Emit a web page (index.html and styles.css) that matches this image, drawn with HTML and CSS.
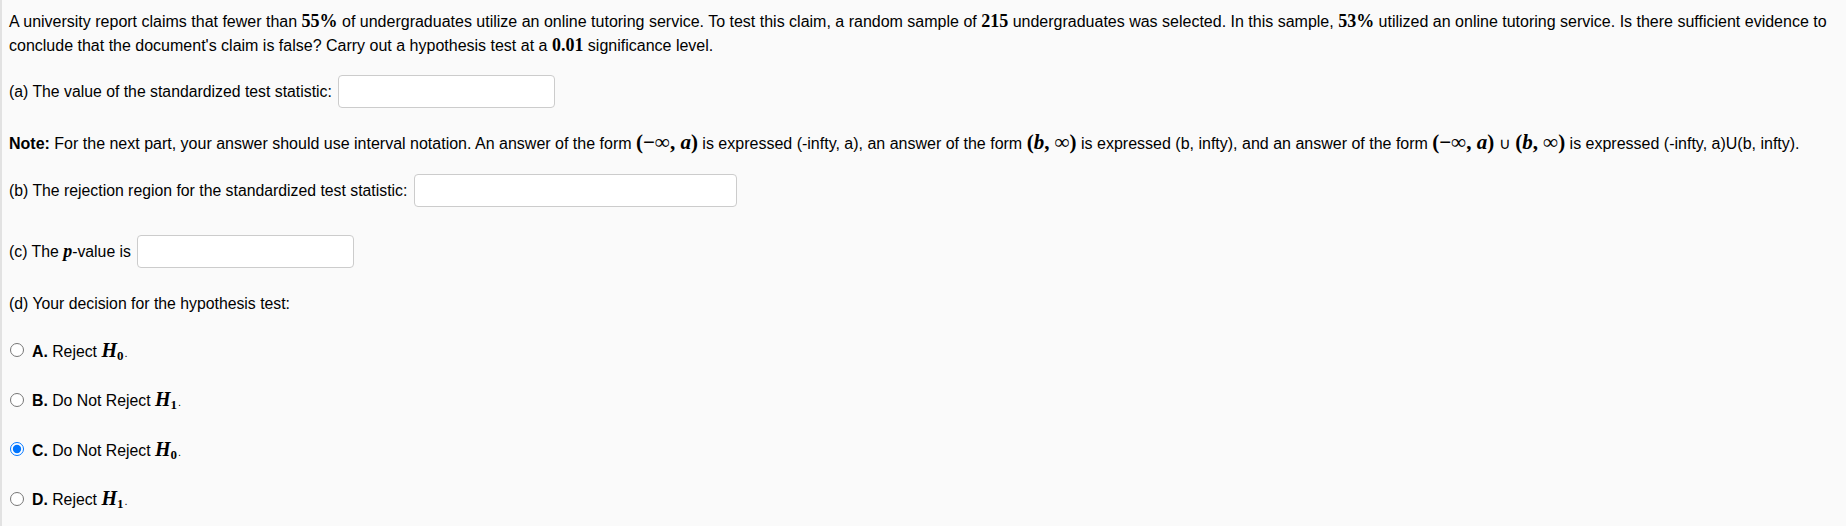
FILE: index.html
```html
<!DOCTYPE html>
<html>
<head>
<meta charset="utf-8">
<link rel="stylesheet" href="styles.css">
</head>
<body>
<div class="page">
  <p class="intro">A university report claims that fewer than <span class="m">55%</span> of undergraduates utilize an online tutoring service. To test this claim, a random sample of <span class="m">215</span> undergraduates was selected. In this sample, <span class="m">53%</span> utilized an online tutoring service. Is there sufficient evidence to conclude that the document's claim is false? Carry out a hypothesis test at a <span class="m">0.01</span> significance level.</p>

  <div class="row row-a"><span>(a) The value of the standardized test statistic: </span><span class="box box-s"></span></div>

  <p class="note"><b>Note:</b> For the next part, your answer should use interval notation. An answer of the form <span class="m mi">(−∞, <i>a</i>)</span> is expressed (-infty, a), an answer of the form <span class="m mi">(<i>b</i>, ∞)</span> is expressed (b, infty), and an answer of the form <span class="m mi">(−∞, <i>a</i>)</span> ∪ <span class="m mi">(<i>b</i>, ∞)</span> is expressed (-infty, a)U(b, infty).</p>

  <div class="row row-b"><span>(b) The rejection region for the standardized test statistic: </span><span class="box box-l"></span></div>

  <div class="row row-c"><span>(c) The <span class="m"><i>p</i></span>-value is </span><span class="box box-s"></span></div>

  <p class="decision">(d) Your decision for the hypothesis test:</p>

  <div class="choices">
    <label class="choice"><input type="radio" name="d"><span><b>A.</b> Reject <span class="m mh"><i>H</i><sub>0</sub></span><span class="dot">.</span></span></label>
    <label class="choice"><input type="radio" name="d"><span><b>B.</b> Do Not Reject <span class="m mh"><i>H</i><sub>1</sub></span><span class="dot">.</span></span></label>
    <label class="choice"><input type="radio" name="d" checked><span><b>C.</b> Do Not Reject <span class="m mh"><i>H</i><sub>0</sub></span><span class="dot">.</span></span></label>
    <label class="choice"><input type="radio" name="d"><span><b>D.</b> Reject <span class="m mh"><i>H</i><sub>1</sub></span><span class="dot">.</span></span></label>
  </div>
</div>
</body>
</html>
```

FILE: styles.css
```css
html, body {
  margin: 0;
  padding: 0;
  background: #fafafa;
}
body {
  font-family: "Liberation Sans", Arial, sans-serif;
  font-size: 16px;
  color: #000;
  height: 526px;
  overflow: hidden;
}
.page {
  border-left: 2px solid #e2e2e2;
  padding: 10px 0 0 7px;
  min-height: 516px;
}
p { margin: 0; }
.intro {
  line-height: 22.5px;
}
.m {
  font-family: "Liberation Serif", "Times New Roman", serif;
  font-size: 18px;
  font-weight: bold;
}
.mi { font-size: 21px; }
.mh { font-size: 20px; }
.m i { font-style: italic; }
.m sub {
  font-size: 13px;
  vertical-align: -3px;
  line-height: 0;
}
.row {
  display: flex;
  align-items: center;
  white-space: pre;
  font-size: 15.8px;
}
.box {
  display: inline-block;
  box-sizing: border-box;
  height: 33px;
  background: #fff;
  border: 1px solid #cccccc;
  border-radius: 4px;
  margin-left: 2px;
}
.box-s { width: 217px; }
.box-l { width: 323px; }
.row-a { margin-top: 18px; }
.note { margin-top: 23px; line-height: 22px; }
.row-b { margin-top: 19px; }
.row-c { margin-top: 28px; }
.decision { margin-top: 25px; line-height: 22px; font-size: 15.8px; }
.choices {
  display: flex;
  flex-direction: column;
  margin-top: 24px;
  gap: 27px;
  font-size: 15.8px;
}
.choice {
  display: flex;
  align-items: center;
  height: 22.5px;
  white-space: pre;
}
.choice input {
  margin: 0 8px 0 1px;
  width: 14px;
  height: 14px;
}
.dot {
  font-size: 11px;
  margin-left: 1px;
}
```
